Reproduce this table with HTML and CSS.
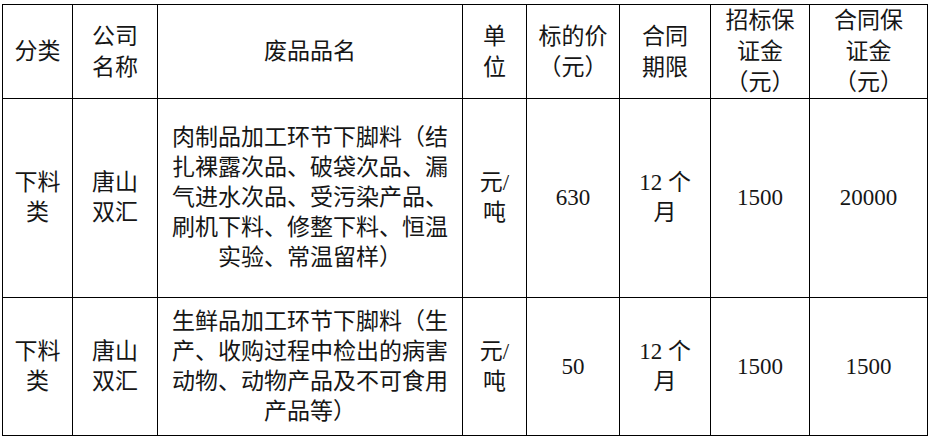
FILE: index.html
```html
<!DOCTYPE html>
<html lang="zh-CN">
<head>
<meta charset="utf-8">
<link rel="stylesheet" href="styles.css">
</head>
<body>
<table class="grid">
  <colgroup>
    <col class="c1"><col class="c2"><col class="c3"><col class="c4"><col class="c5"><col class="c6"><col class="c7"><col class="c8">
  </colgroup>
  <tr class="head">
    <td>分类</td>
    <td>公司<br>名称</td>
    <td>废品品名</td>
    <td>单<br>位</td>
    <td>标的价<br>（元）</td>
    <td>合同<br>期限</td>
    <td>招标保<br>证金<br>（元）</td>
    <td>合同保<br>证金<br>（元）</td>
  </tr>
  <tr class="row1">
    <td>下料<br>类</td>
    <td>唐山<br>双汇</td>
    <td class="desc">肉制品加工环节下脚料（结<br>扎裸露次品、破袋次品、漏<br>气进水次品、受污染产品、<br>刷机下料、修整下料、恒温<br>实验、常温留样）</td>
    <td>元/<br>吨</td>
    <td>630</td>
    <td>12 个<br>月</td>
    <td>1500</td>
    <td>20000</td>
  </tr>
  <tr class="row2">
    <td>下料<br>类</td>
    <td>唐山<br>双汇</td>
    <td class="desc">生鲜品加工环节下脚料（生<br>产、收购过程中检出的病害<br>动物、动物产品及不可食用<br>产品等）</td>
    <td>元/<br>吨</td>
    <td>50</td>
    <td>12 个<br>月</td>
    <td>1500</td>
    <td>1500</td>
  </tr>
</table>
</body>
</html>
```

FILE: styles.css
```css
html, body {
  margin: 0;
  background: #ffffff;
}
body {
  padding: 4px 0 0 2px;
  font-family: "Liberation Serif", "Noto Sans CJK SC", serif;
  color: #161616;
}
.grid {
  border-collapse: collapse;
  table-layout: fixed;
  width: 925px;
  font-size: 23px;
  line-height: 30px;
}
.grid td {
  border: 1px solid #000;
  text-align: center;
  vertical-align: middle;
  padding: 0 4px;
  white-space: nowrap;
}
.c1 { width: 70px; }
.c2 { width: 85px; }
.c3 { width: 305px; }
.c4 { width: 64px; }
.c5 { width: 93px; }
.c6 { width: 91px; }
.c7 { width: 99px; }
.c8 { width: 118px; }
.head { height: 94px; }
.head td { line-height: 31px; }
.row1 { height: 199px; }
.row2 { height: 138px; }
.desc { line-height: 30px; }
```
